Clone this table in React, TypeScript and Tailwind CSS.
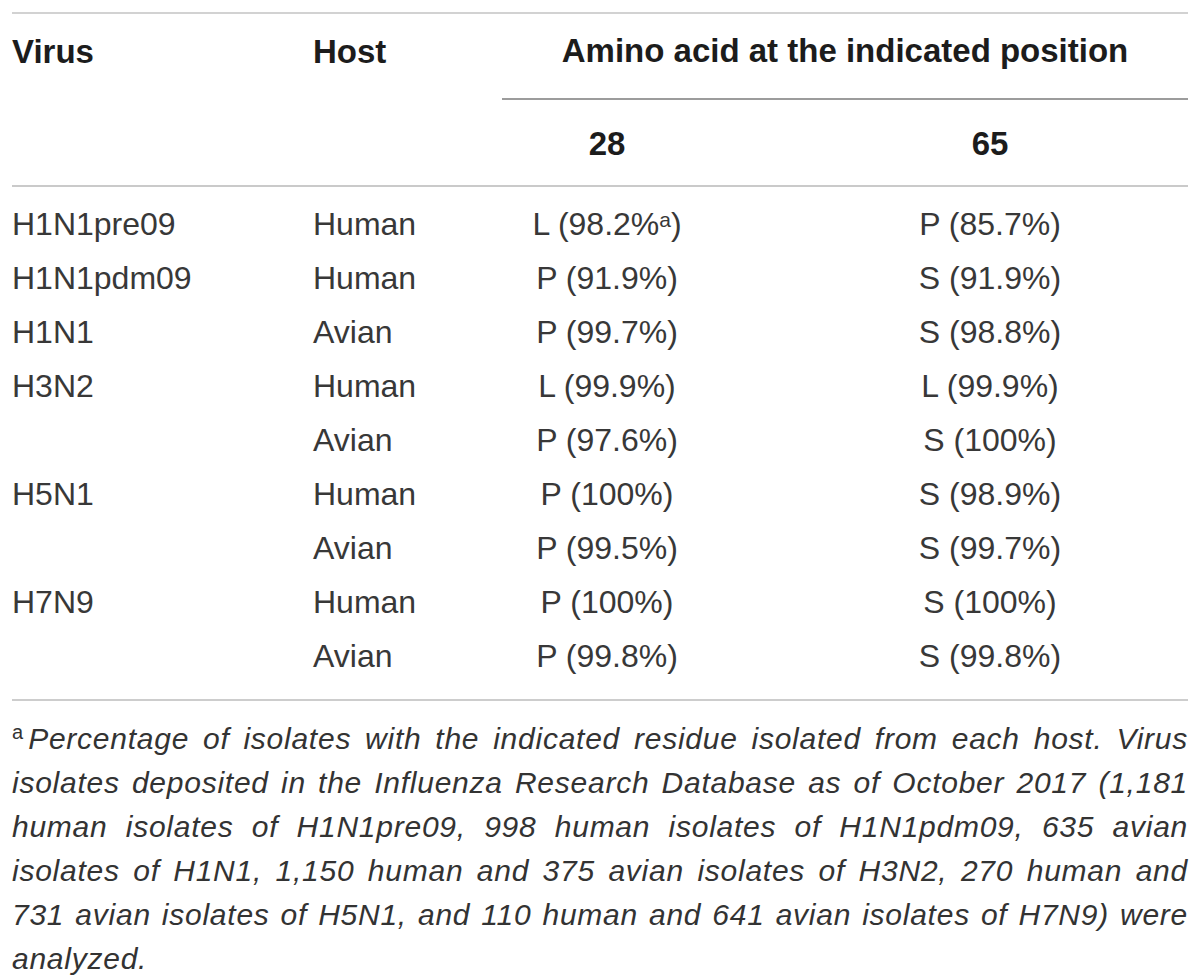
import React from "react";

const rows: [string, string, React.ReactNode, string][] = [
  ["H1N1pre09", "Human", <>L (98.2%<span className="text-[21px] align-[8px] leading-none">a</span>)</>, "P (85.7%)"],
  ["H1N1pdm09", "Human", "P (91.9%)", "S (91.9%)"],
  ["H1N1", "Avian", "P (99.7%)", "S (98.8%)"],
  ["H3N2", "Human", "L (99.9%)", "L (99.9%)"],
  ["", "Avian", "P (97.6%)", "S (100%)"],
  ["H5N1", "Human", "P (100%)", "S (98.9%)"],
  ["", "Avian", "P (99.5%)", "S (99.7%)"],
  ["H7N9", "Human", "P (100%)", "S (100%)"],
  ["", "Avian", "P (99.8%)", "S (99.8%)"],
];

const foot = [
  "Percentage of isolates with the indicated residue isolated from each host. Virus",
  "isolates deposited in the Influenza Research Database as of October 2017 (1,181",
  "human isolates of H1N1pre09, 998 human isolates of H1N1pdm09, 635 avian",
  "isolates of H1N1, 1,150 human and 375 avian isolates of H3N2, 270 human and",
  "731 avian isolates of H5N1, and 110 human and 641 avian isolates of H7N9) were",
];

export default function App() {
  return (
    <div className="w-[1200px] h-[978px] bg-white px-[12px] pt-[12px] overflow-hidden font-['Liberation_Sans',Arial,sans-serif]">
      <div className="border-t-2 border-[#d2d2d2]">
        {/* header */}
        <div className="grid grid-cols-[301px_189px_210px_1fr] text-[33px] font-bold text-[#1c1c1c] border-b-2 border-[#cacaca]">
          <div className="row-span-2 h-[86px] flex items-center pb-[10px]">Virus</div>
          <div className="row-span-2 h-[86px] flex items-center pb-[10px]">Host</div>
          <div className="col-span-2 h-[86px] flex items-center justify-center pb-[10px] border-b-2 border-[#9c9c9c]">
            Amino acid at the indicated position
          </div>
          <div className="col-start-3 h-[85px] flex items-center justify-center pt-[3px]">28</div>
          <div className="h-[85px] flex items-center justify-center pt-[3px] pl-[80px]">65</div>
        </div>
        {/* body */}
        <div className="pt-[10px] pb-[16px] border-b-2 border-[#cdcdcd] text-[32px] text-[#383838]">
          {rows.map((r, i) => (
            <div key={i} className="grid grid-cols-[301px_189px_210px_1fr] h-[54px] items-center">
              <div>{r[0]}</div>
              <div>{r[1]}</div>
              <div className="text-center whitespace-nowrap">{r[2]}</div>
              <div className="text-center pl-[80px] whitespace-nowrap">{r[3]}</div>
            </div>
          ))}
        </div>
        {/* footnote */}
        <div className="pt-[16px] text-[30px] tracking-[0.75px] leading-[44px] italic text-[#333333]">
          {foot.map((l, i) => (
            <div key={i} className="whitespace-nowrap text-justify [text-align-last:justify]">
              {i === 0 && (
                <span className="not-italic text-[20px] align-[10px] leading-none mr-[5px] tracking-normal">a</span>
              )}
              {l}
            </div>
          ))}
          <div>analyzed.</div>
        </div>
      </div>
    </div>
  );
}
